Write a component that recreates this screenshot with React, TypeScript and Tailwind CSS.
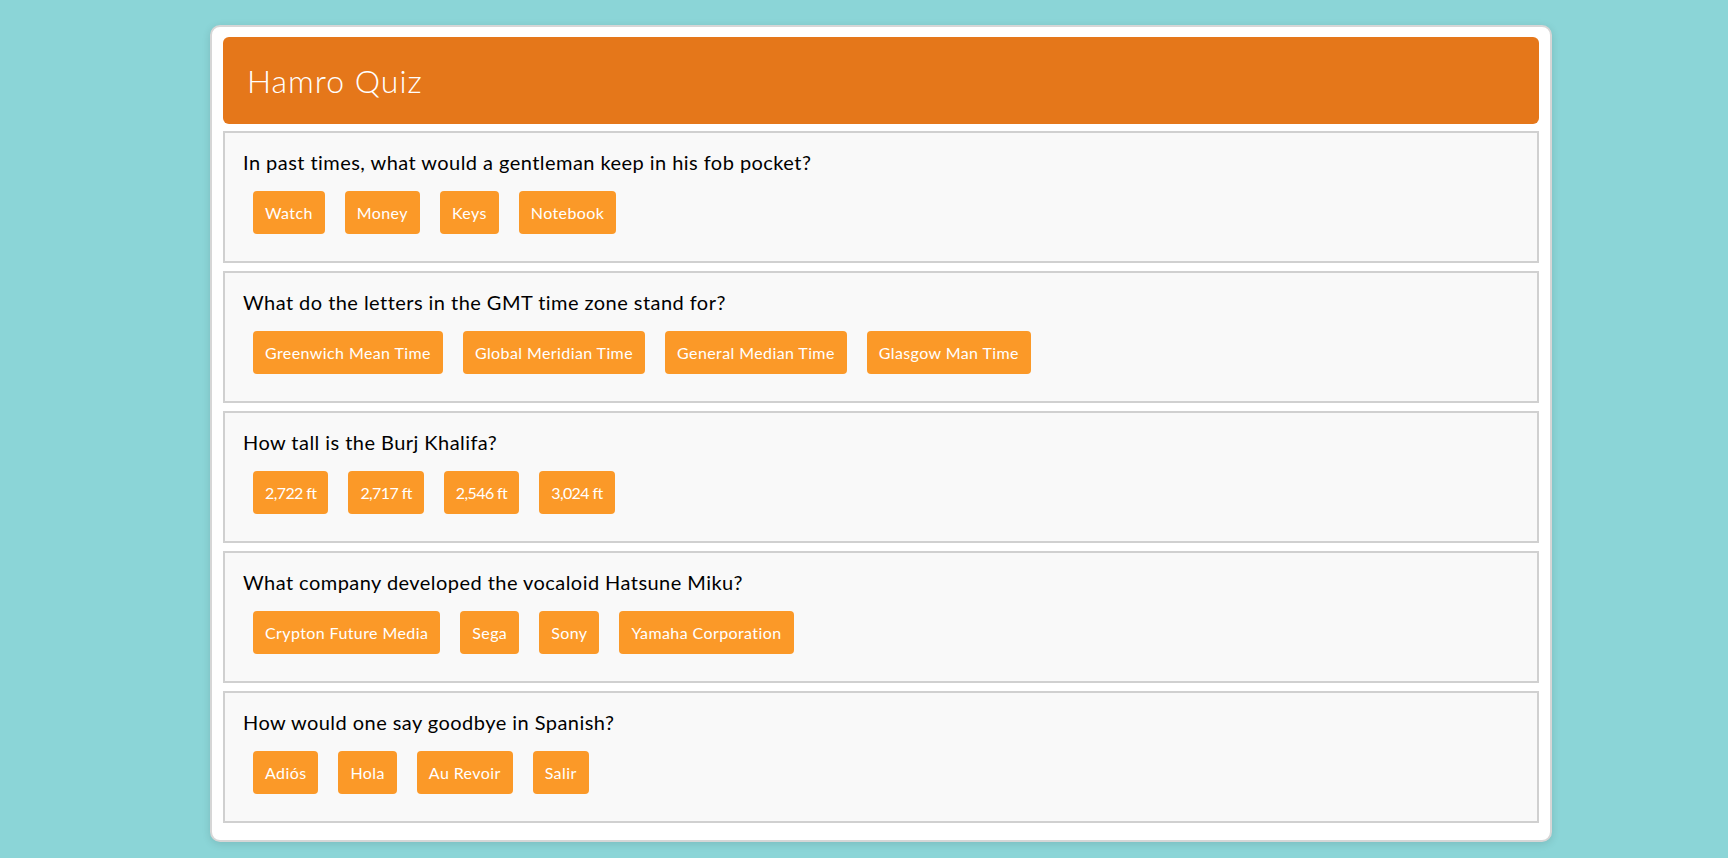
import React from "react";

const questions: { q: string; a: string[]; numeric?: boolean }[] = [
  { q: "In past times, what would a gentleman keep in his fob pocket?", a: ["Watch", "Money", "Keys", "Notebook"] },
  { q: "What do the letters in the GMT time zone stand for?", a: ["Greenwich Mean Time", "Global Meridian Time", "General Median Time", "Glasgow Man Time"] },
  { q: "How tall is the Burj Khalifa?", a: ["2,722 ft", "2,717 ft", "2,546 ft", "3,024 ft"], numeric: true },
  { q: "What company developed the vocaloid Hatsune Miku?", a: ["Crypton Future Media", "Sega", "Sony", "Yamaha Corporation"] },
  { q: "How would one say goodbye in Spanish?", a: ["Adiós", "Hola", "Au Revoir", "Salir"] },
];

export default function App() {
  return (
    <div
      className="w-full h-[858px] bg-[#8bd5d7] pt-[25px] overflow-hidden"
      style={{ fontFamily: "Lato, 'Open Sans', sans-serif" }}
    >
      <div className="ml-[210px] w-[1342px] h-[817px] bg-white rounded-[10px] border-2 border-[#d6d6d6] shadow-[0_2px_8px_rgba(0,0,0,0.12)] px-[11px] pt-[10px] flex flex-col gap-[8px]">
        <div className="h-[87px] bg-[#e5771a] rounded-[6px] flex items-center pl-[24px] mb-[-1px] shrink-0">
          <h1 className="text-[32px] font-light text-white leading-none tracking-[1px]">Hamro Quiz</h1>
        </div>
        {questions.map((item, i) => (
          <div
            key={i}
            className="h-[132px] shrink-0 bg-[#f9f9f9] border-2 border-[#d0d0d0] pl-[18px] pt-[14px]"
          >
            <p className="text-[20px] text-black leading-[30px] tracking-[0.45px]">{item.q}</p>
            <div className="flex gap-[20px] mt-[14px] ml-[10px]">
              {item.a.map((ans) => (
                <button
                  key={ans}
                  className={
                    item.numeric
                      ? "h-[43px] px-[12px] bg-[#fb9928] text-white text-[16px] rounded-[4px] tracking-[-0.6px]"
                      : "h-[43px] px-[12px] bg-[#fb9928] text-white text-[16px] rounded-[4px] tracking-[0.4px]"
                  }
                >
                  {ans}
                </button>
              ))}
            </div>
          </div>
        ))}
      </div>
    </div>
  );
}
